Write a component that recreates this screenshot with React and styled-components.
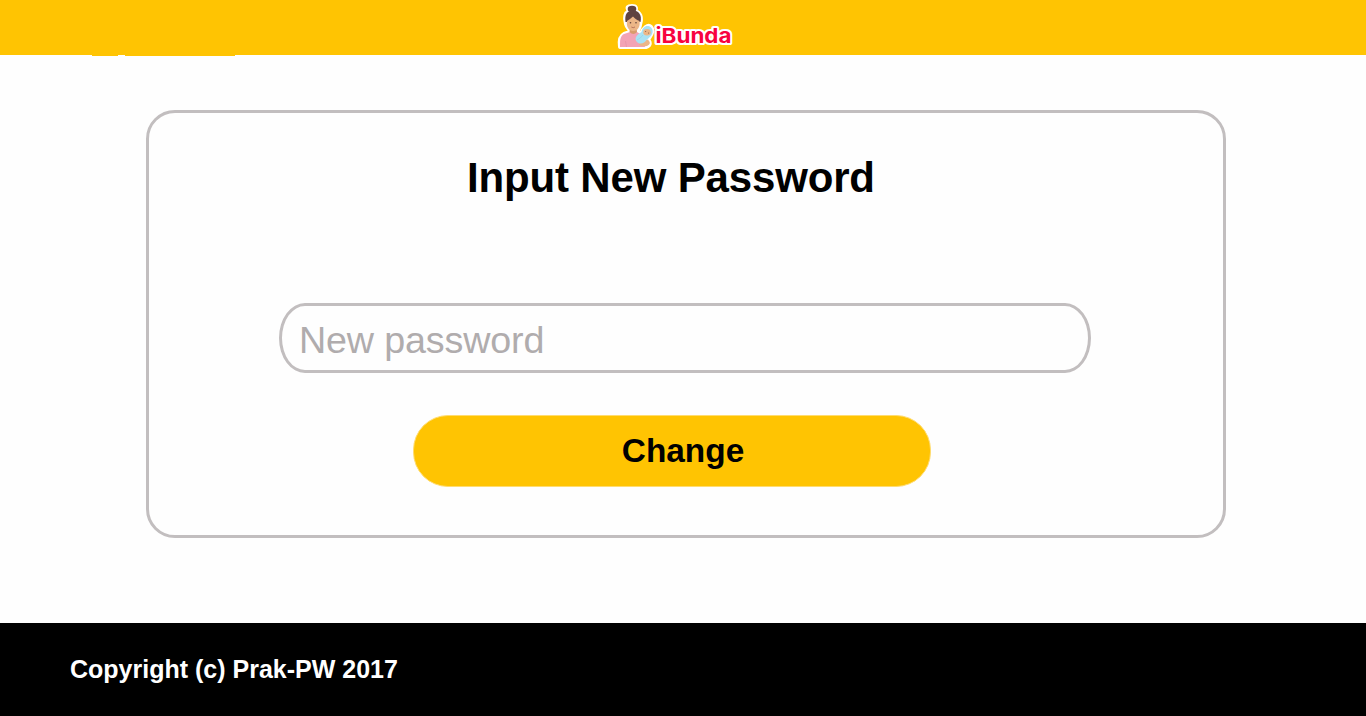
import React from "react";
import styled, { createGlobalStyle } from "styled-components";

const GlobalStyle = createGlobalStyle`
  * { box-sizing: border-box; }
  body {
    margin: 0;
    background: #fefefe;
    font-family: "Liberation Sans", Arial, sans-serif;
  }
`;

const Page = styled.div`
  display: flex;
  flex-direction: column;
  height: 716px;
  overflow: hidden;
`;

const Header = styled.header`
  position: relative;
  flex: none;
  height: 55px;
  padding-left: 614px;
  background: #ffc402;
`;

const Underline = styled.span`
  position: absolute;
  top: 55px;
  left: ${(p) => p.$left}px;
  width: ${(p) => p.$width}px;
  height: 1px;
  background: #ffc402;
`;

const LogoArt = styled.svg`
  display: block;
`;

const Main = styled.main`
  flex: 1;
  padding: 55px 140px 0 146px;
`;

const Card = styled.form`
  display: flex;
  flex-direction: column;
  align-items: flex-start;
  height: 428px;
  padding: 41px 0 0 130px;
  border: 3px solid #c2bebf;
  border-radius: 29px;
`;

const Title = styled.h1`
  margin: 0 0 102px 188px;
  font-size: 42px;
  line-height: 47px;
  letter-spacing: -0.16px;
  white-space: nowrap;
`;

const PasswordField = styled.input`
  flex: none;
  width: 812px;
  height: 70px;
  margin: 0;
  padding: 5px 17px 0;
  border: 3px solid #c2bebf;
  border-radius: 26px / 35px;
  background: transparent;
  font-family: inherit;
  font-size: 37.7px;
  letter-spacing: -0.16px;
  outline: none;
  &::placeholder {
    color: #b0acad;
    opacity: 1;
  }
`;

const SubmitButton = styled.button`
  flex: none;
  width: 518px;
  height: 72px;
  margin: 42px 0 0 134px;
  padding: 0 0 0 22px;
  border: 1px solid #ffdc70;
  border-radius: 35px;
  background: #ffc402;
  color: #000;
  font: bold 33.4px "Liberation Sans", Arial, sans-serif;
`;

const Footer = styled.footer`
  flex: none;
  height: 93px;
  padding: 32px 70px 0;
  background: #000;
  color: #fff;
  font-size: 25px;
  font-weight: bold;
  line-height: 29px;
`;

const silhouette =
  "M15 11C12 7 14 6 18 6C22 6 23 8 21 11C27 13 28 18 26 25C26 28 24 29 23 32L27 34C29 28 34 24 37 27C41 31 36 37 34 40C37 43 36 46 32 47L6 47C5 40 6 36 10 34L16 32C16 29 13 28 12 24C10 17 11 13 15 11Z";

function Logo() {
  return (
    <LogoArt width="122" height="55" viewBox="0 0 122 55" role="img" aria-label="iBunda">
      <path d={silhouette} fill="#fff" stroke="#fff" strokeWidth="4" strokeLinejoin="round" />
      <path d="M6 47C6 40 6 36 10 34L16 32L23 32L28 35L31 47Z" fill="#f3a3b5" />
      <path d="M16 27L22.500 27L23 32Q19.500 36 15.500 32Z" fill="#d99c6b" />
      <ellipse cx="18" cy="9" rx="4.300" ry="3.300" fill="#604340" />
      <path d="M11.500 22C10.500 14 13 11 18.500 10.500C25 10.500 28 15 26.500 22Z" fill="#604340" />
      <path d="M13 21C15 20 17 18 19 16.500C21 18.500 23 20 25.500 21C26.500 27 23.500 31 19.200 31C15 31 12 27 13 21Z" fill="#ecb687" />
      <circle cx="16.500" cy="22.800" r=".8" fill="#60433b" />
      <circle cx="22" cy="22.800" r=".8" fill="#60433b" />
      <path d="M17.300 27Q19.200 28.400 21 27" fill="none" stroke="#ad6553" strokeWidth=".8" />
      <path d="M11.500 41L12.500 47" fill="none" stroke="#e28fa2" strokeWidth=".6" />
      <path d="M26 42L34 39.500Q38 44 33 46Q28 47 25 45Z" fill="#ecb687" />
      <path d="M37 27.500C33 24 28.500 27 27.500 32C22 35 20 39 23 42C26 45 31 43 32.500 40C37 37 41 31.500 37 27.500Z" fill="#a9e2f4" />
      <path d="M23 40Q27 38 29 35" fill="none" stroke="#8bd3e8" strokeWidth=".6" />
      <ellipse cx="33" cy="32.200" rx="3.700" ry="3.200" fill="#ecb687" />
      <circle cx="31.700" cy="31.600" r=".5" fill="#73513f" />
      <circle cx="34.600" cy="33" r=".5" fill="#73513f" />
      <text
        x="41.5"
        y="43"
        textLength="76"
        lengthAdjust="spacingAndGlyphs"
        fontFamily="Inter, sans-serif"
        fontSize="20.5"
        fontWeight="700"
        fill="#f8033f"
        stroke="#fff"
        strokeWidth="4"
        strokeLinejoin="round"
        paintOrder="stroke"
      >
        iBunda
      </text>
    </LogoArt>
  );
}

export default function App() {
  return (
    <Page>
      <GlobalStyle />
      <Header>
        <Logo />
        <Underline $left={92} $width={26} />
        <Underline $left={125} $width={110} />
      </Header>
      <Main>
        <Card onSubmit={(e) => e.preventDefault()}>
          <Title>Input New Password</Title>
          <PasswordField type="password" placeholder="New password" />
          <SubmitButton type="submit">Change</SubmitButton>
        </Card>
      </Main>
      <Footer>Copyright (c) Prak-PW 2017</Footer>
    </Page>
  );
}
